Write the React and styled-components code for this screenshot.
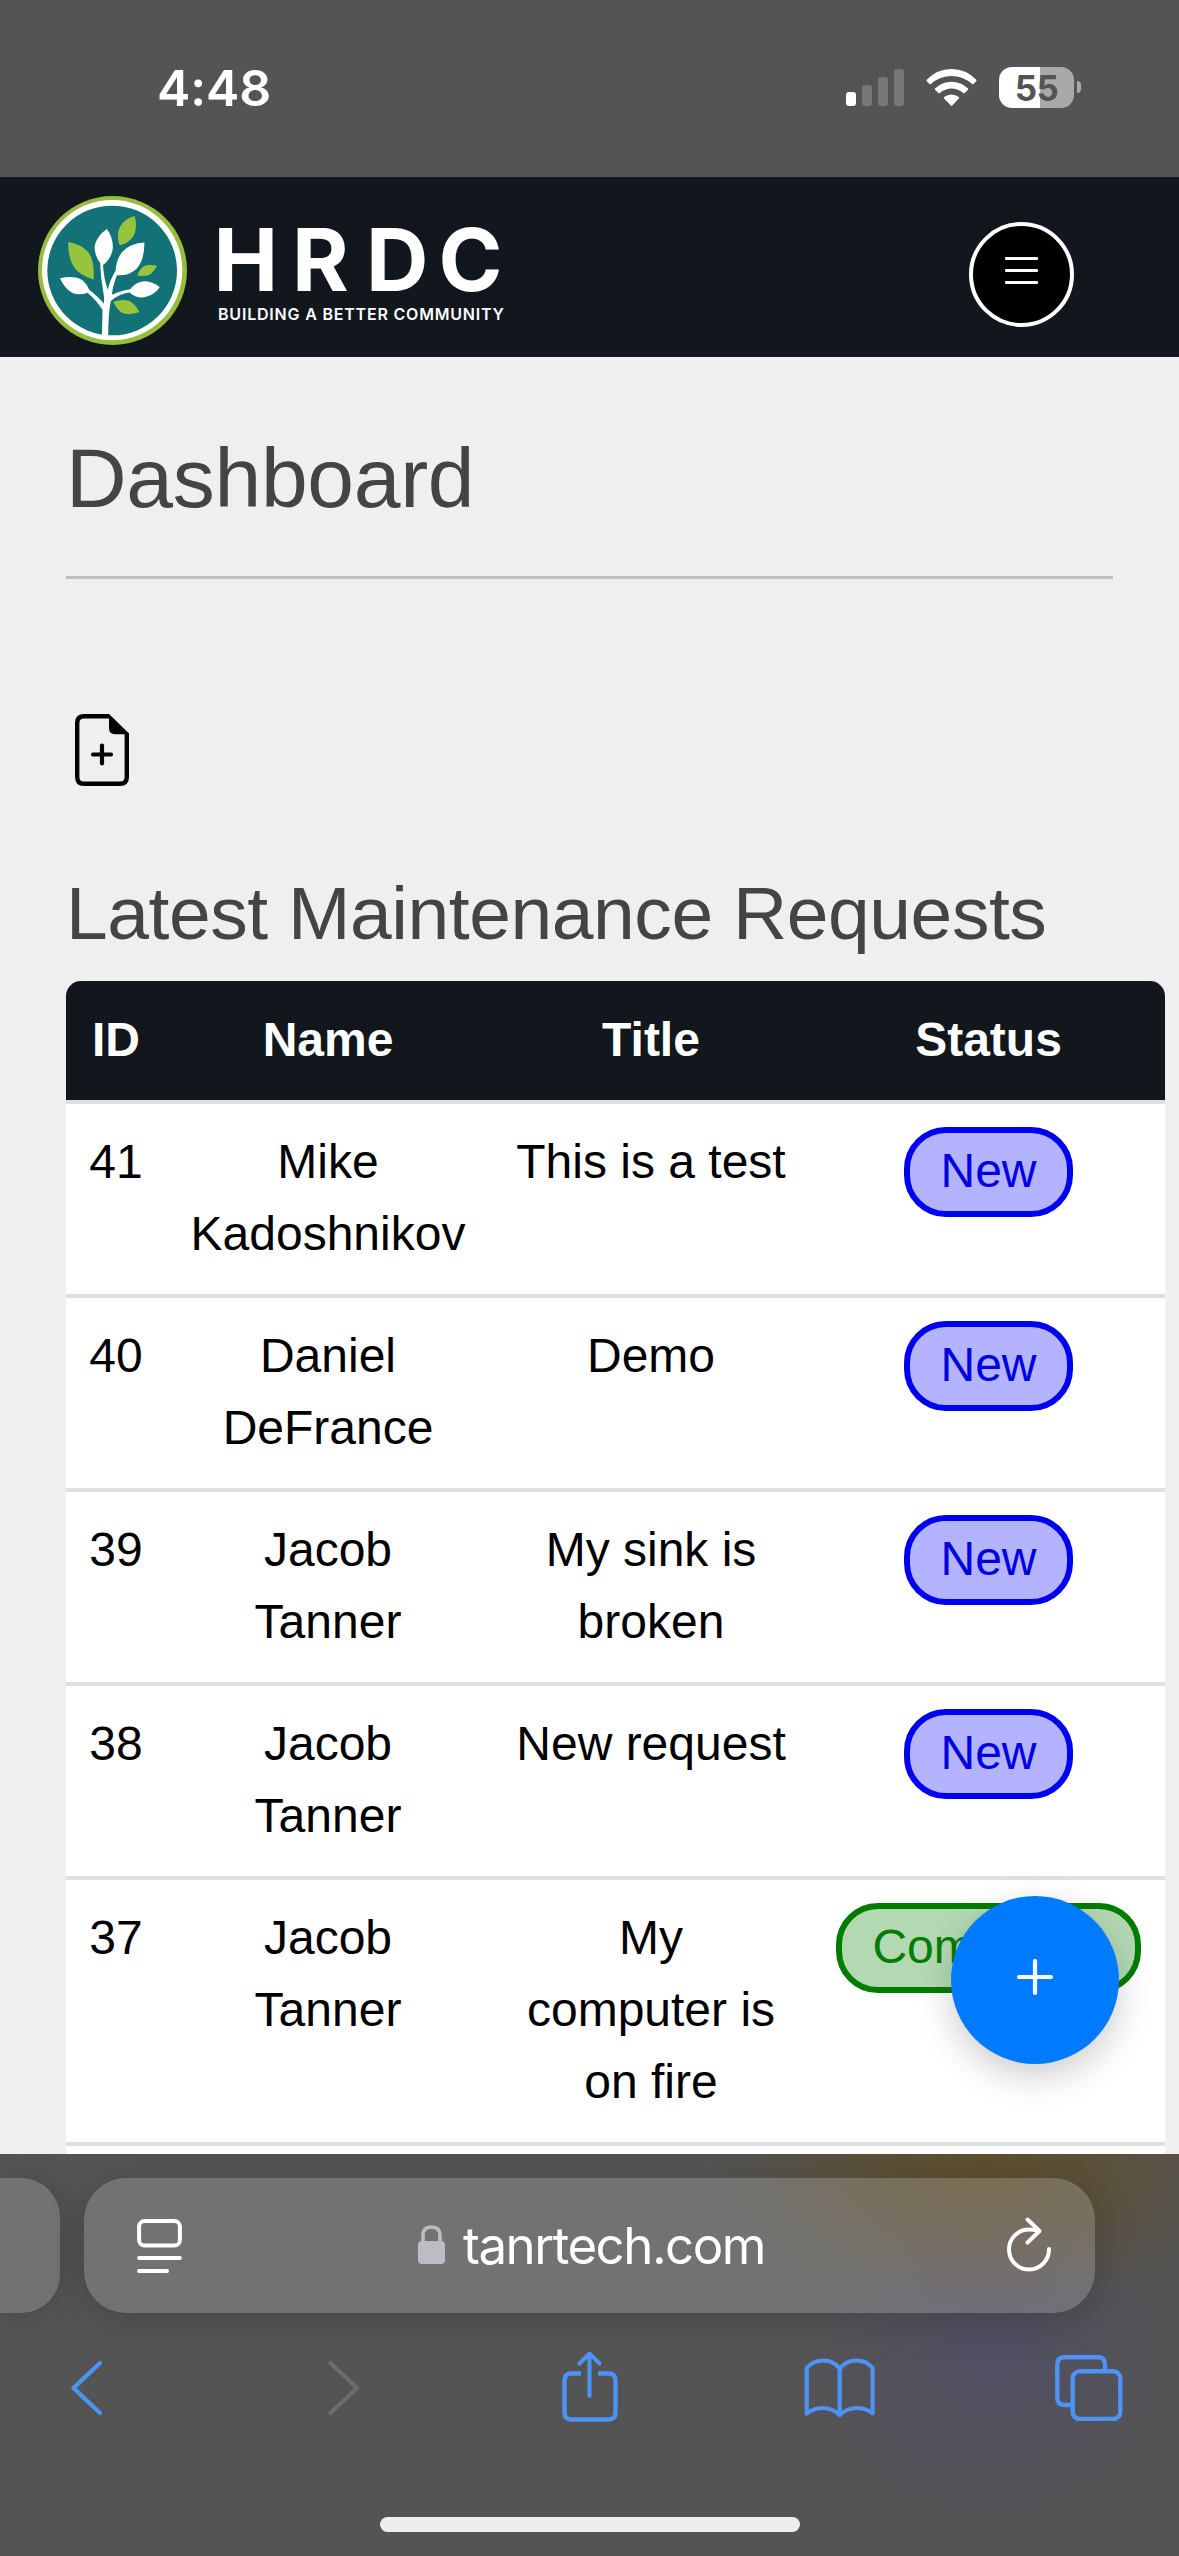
import React from "react";
import styled, { createGlobalStyle } from "styled-components";

const GlobalStyle = createGlobalStyle`
  * { box-sizing: border-box; }
  body { margin: 0; background: #efefef; font-family: "Liberation Sans", Arial, sans-serif; }
  svg { display: block; overflow: visible; }
`;

const Screen = styled.div`
  width: 1179px;
  height: 2556px;
  display: flex;
  flex-direction: column;
  overflow: hidden;
  background: #efefef;
`;

/* ---------- Status bar ---------- */
const StatusBar = styled.div`
  flex: none;
  height: 177px;
  padding: 67px 98px 0 157px;
  display: flex;
  justify-content: space-between;
  align-items: flex-start;
  background: #545454;
`;
const Clock = styled.div`
  font: 600 50px/42px Inter, sans-serif;
  letter-spacing: -0.1px;
  color: #fff;
`;
const StatusIcons = styled.div`
  display: flex;
  align-items: flex-start;
  height: 41px;
`;
const Signal = styled.div`
  display: flex;
  align-items: flex-end;
  gap: 6px;
  height: 39px;
  margin-right: 22px;
`;
const SignalBar = styled.div`
  width: 10px;
  height: ${(p) => p.$height}px;
  border-radius: 3px;
  background: ${(p) => (p.$active ? "#fff" : "#777")};
`;
const WifiIcon = styled.svg`
  width: 51px;
  height: 38px;
  margin: 2px 22px 0 0;
`;
const Battery = styled.div`
  width: 75px;
  height: 41px;
  border-radius: 13px;
  background: linear-gradient(90deg, #fff 41px, #a9a9a9 41px);
  color: #545454;
  font: 700 35px/42px Inter, sans-serif;
  letter-spacing: -0.5px;
  text-align: center;
`;
const BatteryNub = styled.div`
  width: 4px;
  height: 12px;
  margin: 14px 0 0 3px;
  border-radius: 0 4px 4px 0;
  background: #a9a9a9;
`;

/* ---------- Site header ---------- */
const Header = styled.header`
  flex: none;
  height: 180px;
  padding: 19px 105px 0 38px;
  display: flex;
  justify-content: space-between;
  align-items: flex-start;
  background: #12171d;
`;
const Brand = styled.div`
  display: flex;
  align-items: flex-start;
  gap: 32px;
`;
const MenuButton = styled.button`
  width: 105px;
  height: 105px;
  margin: 26px 0 0;
  padding: 0;
  border: 4px solid #fff;
  border-radius: 50%;
  background: #000;
  display: flex;
  justify-content: center;
  align-items: flex-start;
`;
const MenuLines = styled.span`
  display: flex;
  flex-direction: column;
  gap: 9px;
  width: 33px;
  margin-top: 31px;
`;
const MenuLine = styled.span`
  height: 3px;
  border-radius: 1px;
  background: #fff;
`;

/* ---------- Page ---------- */
const Page = styled.main`
  flex: 1;
  min-height: 0;
  overflow: hidden;
  padding: 0 14px 0 66px;
`;
const PageTitle = styled.h1`
  margin: 0 52px 0 0;
  height: 222px;
  padding-top: 73px;
  border-bottom: 3px solid #bfbfbf;
  font-size: 84px;
  line-height: 96px;
  font-weight: 400;
  letter-spacing: -0.3px;
  color: #444;
`;
const NewFileIcon = styled.svg`
  width: 54px;
  height: 72px;
  margin: 135px 0 0 9px;
`;
const SectionTitle = styled.h2`
  margin: 0;
  padding-top: 84px;
  height: 195px;
  font-size: 75px;
  line-height: 86px;
  font-weight: 400;
  letter-spacing: -0.44px;
  white-space: nowrap;
  color: #444;
`;
const Table = styled.div`
  width: 1099px;
  font-size: 48px;
  line-height: 72px;
  text-align: center;
`;
const Row = styled.div`
  display: grid;
  grid-template-columns: 100px 324px 322px 353px;
  border-bottom: 4px solid #dddfe0;
  background: #fff;
  color: #000;
`;
const HeadRow = styled(Row)`
  background: #12171d;
  background-clip: padding-box;
  border-radius: 15px 15px 0 0;
  color: #fff;
  font-weight: 700;
`;
const HeadCell = styled.div`
  padding: 23px 0 24px;
`;
const Cell = styled.div`
  padding: 22px 24px 24px;
  &:first-child {
    padding-left: 0;
    padding-right: 0;
  }
`;
const StatusCell = styled.div`
  padding-top: 23px;
  display: flex;
  justify-content: center;
  align-items: flex-start;
`;
const tones = {
  New: { ink: "#0000e0", line: "#0000f0", fill: "#b3b3ff" },
  Completed: { ink: "#007d00", line: "#007d00", fill: "#b3d9b3" },
};
const Badge = styled.span`
  height: 90px;
  padding: 2px 30px 0;
  border: 6px solid ${(p) => tones[p.$tone].line};
  border-radius: 42px;
  background: ${(p) => tones[p.$tone].fill};
  color: ${(p) => tones[p.$tone].ink};
`;
const AddButton = styled.button`
  position: fixed;
  left: 951px;
  top: 1896px;
  width: 168px;
  height: 168px;
  padding: 0 0 6px;
  border: 0;
  border-radius: 50%;
  background: #007bff;
  box-shadow: 0 12px 36px rgba(0, 0, 0, 0.2);
  display: flex;
  justify-content: center;
  align-items: center;
`;

/* ---------- Browser bar ---------- */
const BrowserBar = styled.footer`
  position: relative;
  flex: none;
  height: 402px;
  padding-top: 24px;
  overflow: hidden;
  background:
    radial-gradient(ellipse 300px 170px at 985px 5px, rgba(100, 76, 22, 0.65), rgba(100, 76, 22, 0.42) 40%, rgba(100, 76, 22, 0.12) 75%, rgba(100, 76, 22, 0) 100%),
    radial-gradient(ellipse 190px 180px at 990px 200px, rgba(76, 72, 112, 0.5), rgba(76, 72, 112, 0.24) 50%, rgba(76, 72, 112, 0) 100%),
    #545455;
`;
const TabStrip = styled.div`
  display: flex;
  gap: 24px;
`;
const PreviousTab = styled.div`
  width: 60px;
  height: 135px;
  border-radius: 0 39px 39px 0;
  background: rgba(255, 255, 255, 0.18);
  box-shadow: 0 0 36px rgba(0, 0, 0, 0.14);
`;
const AddressBar = styled.div`
  width: 1011px;
  height: 135px;
  padding: 0 44px;
  border-radius: 42px;
  background: rgba(255, 255, 255, 0.18);
  box-shadow: 0 6px 40px rgba(0, 0, 0, 0.16);
  display: grid;
  grid-template-columns: 1fr auto 1fr;
  align-items: center;
`;
const ReaderIcon = styled.svg`
  width: 45px;
  height: 54px;
  margin: 0 0 0 9px;
`;
const Address = styled.div`
  display: flex;
  align-items: center;
  gap: 18px;
  width: 346px;
  margin-left: 3px;
  font: 400 51px/60px Inter, sans-serif;
  letter-spacing: -1.5px;
  white-space: nowrap;
  color: #fff;
`;
const LockIcon = styled.svg`
  flex: none;
  width: 27px;
  height: 39px;
  margin-top: -2px;
`;
const ReloadIcon = styled.svg`
  width: 44px;
  height: 54px;
  justify-self: end;
  margin-bottom: 4px;
`;
const Toolbar = styled.nav`
  display: flex;
  justify-content: space-between;
  margin-top: 33px;
  padding: 0 51px;
`;
const ToolIcon = styled.svg`
  width: 72px;
  height: 80px;
  fill: none;
  stroke: ${(p) => (p.$disabled ? "#6c6c6d" : "#4d93f6")};
  stroke-width: 4.4px;
  stroke-linecap: round;
  stroke-linejoin: round;
`;
const HomeIndicator = styled.div`
  width: 420px;
  height: 15px;
  margin: 91px 0 0 380px;
  border-radius: 8px;
  background: #eee;
`;

const requests = [
  { id: 41, name: "Mike Kadoshnikov", title: "This is a test", status: "New" },
  { id: 40, name: "Daniel DeFrance", title: "Demo", status: "New" },
  { id: 39, name: "Jacob Tanner", title: "My sink is broken", status: "New" },
  { id: 38, name: "Jacob Tanner", title: "New request", status: "New" },
  { id: 37, name: "Jacob Tanner", title: "My computer is on fire", status: "Completed" },
];

function TreeEmblem() {
  return (
    <svg width="149" height="149" viewBox="24 48 448 448">
      <circle cx="248" cy="272" r="224" fill="#96bd3d" />
      <circle cx="247" cy="271" r="211" fill="#fff" />
      <circle cx="247" cy="272" r="195" fill="#137277" />
      <g fill="#fff">
        <path d="M216 474 L218 390 Q200 362 172 338 L178 330 Q206 352 222 372 Q224 350 220 335 Q212 290 211 250 L219 250 Q222 300 234 330 Q240 300 258 272 L266 276 Q250 310 246 345 Q266 334 302 328 L304 337 Q268 342 243 364 Q235 400 235 474 Z" />
        <path d="M231 147 Q250 172 249 204 Q246 236 217 258 Q194 232 194 200 Q200 168 231 147 Z" />
        <path d="M344 188 Q344 240 321 266 Q298 290 257 286 Q256 242 277 216 Q302 190 344 188 Z" />
        <path d="M90 295 Q134 286 157 301 Q173 313 180 336 Q150 350 125 338 Q104 325 90 295 Z" />
        <path d="M390 322 Q368 304 342 304 Q314 306 296 335 Q314 354 340 353 Q372 348 390 322 Z" />
      </g>
      <g fill="#96c43c">
        <path d="M115 186 Q154 192 176 218 Q195 244 191 299 Q150 288 131 260 Q114 234 115 186 Z" />
        <path d="M315 108 Q324 144 311 168 Q298 190 269 196 Q258 160 272 138 Q286 116 315 108 Z" />
        <path d="M382 258 Q346 250 334 266 Q326 276 323 287 Q352 292 364 282 Q374 274 382 258 Z" />
        <path d="M250 366 Q278 356 299 364 Q318 374 329 397 Q300 408 277 400 Q262 390 250 366 Z" />
      </g>
    </svg>
  );
}

function Wordmark() {
  return (
    <svg width="290" height="149" viewBox="219 196 290 149" fill="#fff" fontFamily="Inter, sans-serif">
      <text x="213.5 292 366 438.5" y="290.5" fontSize="86.5" fontWeight="700">
        HRDC
      </text>
      <text x="218" y="320" fontSize="16" fontWeight="600" textLength="286">
        BUILDING A BETTER COMMUNITY
      </text>
    </svg>
  );
}

export default function App() {
  return (
    <Screen>
      <GlobalStyle />
      <StatusBar>
        <Clock>4:48</Clock>
        <StatusIcons>
          <Signal>
            <SignalBar $height={14} $active />
            <SignalBar $height={21} />
            <SignalBar $height={29} />
            <SignalBar $height={37} />
          </Signal>
          <WifiIcon viewBox="0 0 51 38" fill="#fff">
            <path d="M0.8 10.8 Q11 0 25.5 0 Q40 0 50.2 10.8 Q50.8 11.5 50.2 12.2 L47.4 15 Q46.8 15.6 46.1 15 Q37 7 25.5 7 Q14 7 4.9 15 Q4.2 15.6 3.6 15 L0.8 12.2 Q0.2 11.5 0.8 10.8 Z" />
            <path d="M9 19.4 Q16 12.8 25.5 12.8 Q35 12.8 42 19.4 Q42.7 20.1 42 20.8 L38.6 24.1 Q38 24.8 37.2 24.1 Q32 19.6 25.5 19.6 Q19 19.6 13.8 24.1 Q13 24.8 12.4 24.1 L9 20.8 Q8.3 20.1 9 19.4 Z" />
            <path d="M18.2 28.1 Q21.3 25.6 25.5 25.6 Q29.7 25.6 32.8 28.1 Q33.6 28.9 32.9 29.6 L26.2 36.6 Q25.5 37.3 24.8 36.6 L18.1 29.6 Q17.4 28.9 18.2 28.1 Z" />
          </WifiIcon>
          <Battery>55</Battery>
          <BatteryNub />
        </StatusIcons>
      </StatusBar>

      <Header>
        <Brand>
          <TreeEmblem />
          <Wordmark />
        </Brand>
        <MenuButton aria-label="Menu">
          <MenuLines>
            <MenuLine />
            <MenuLine />
            <MenuLine />
          </MenuLines>
        </MenuButton>
      </Header>

      <Page>
        <PageTitle>Dashboard</PageTitle>
        <NewFileIcon viewBox="0 0 54 72">
          <path d="M34 2.2 H9 Q2.2 2.2 2.2 9 V63 Q2.2 69.8 9 69.8 H45 Q51.8 69.8 51.8 63 V19" fill="none" stroke="#000" strokeWidth="4.4" />
          <path d="M34 0 L54 19.5 V20.2 H40 Q34 20.2 34 14 Z" />
          <path d="M27 31.5 V49.5 M18 40.5 H36" stroke="#000" strokeWidth="4.2" strokeLinecap="round" />
        </NewFileIcon>
        <SectionTitle>Latest Maintenance Requests</SectionTitle>
        <Table>
          <HeadRow>
            <HeadCell>ID</HeadCell>
            <HeadCell>Name</HeadCell>
            <HeadCell>Title</HeadCell>
            <HeadCell>Status</HeadCell>
          </HeadRow>
          {requests.map((r) => (
            <Row key={r.id}>
              <Cell>{r.id}</Cell>
              <Cell>{r.name}</Cell>
              <Cell>{r.title}</Cell>
              <StatusCell>
                <Badge $tone={r.status}>{r.status}</Badge>
              </StatusCell>
            </Row>
          ))}
          <Row>
            <Cell />
          </Row>
        </Table>
      </Page>

      <AddButton aria-label="Add request">
        <svg width="36" height="36" viewBox="0 0 36 36" stroke="#fff" strokeWidth="4.2" strokeLinecap="round">
          <path d="M18 2 V34 M2 18 H34" />
        </svg>
      </AddButton>

      <BrowserBar>
        <TabStrip>
          <PreviousTab />
          <AddressBar>
            <ReaderIcon viewBox="0 0 45 54" fill="none" stroke="#fff" strokeWidth="4" strokeLinecap="round">
              <rect x="2.1" y="2.1" width="40.8" height="24.4" rx="5.5" />
              <path d="M2.1 39 H42.9 M2.1 52 H30" />
            </ReaderIcon>
            <Address>
              <LockIcon viewBox="0 0 27 39">
                <rect x="0" y="16" width="27" height="23" rx="4" fill="#bdbcc5" />
                <path d="M5 17 V10.5 Q5 2 13.5 2 Q22 2 22 10.5 V17" fill="none" stroke="#bdbcc5" strokeWidth="3.6" />
              </LockIcon>
              <span>tanrtech.com</span>
            </Address>
            <ReloadIcon viewBox="0 0 44 54" fill="none" stroke="#fff" strokeWidth="4" strokeLinecap="round" strokeLinejoin="round">
              <path d="M42 32 A20 20 0 1 1 22 12.5 Q27 12.5 32 14" />
              <path d="M20.5 2.5 L32.5 14 L20.5 25.5" />
            </ReloadIcon>
          </AddressBar>
        </TabStrip>
        <Toolbar>
          <ToolIcon viewBox="0 0 72 80">
            <path d="M49 17 L22.5 42 L49 67" />
          </ToolIcon>
          <ToolIcon viewBox="0 0 72 80" $disabled>
            <path d="M28.5 17 L55 42 L28.5 67" />
          </ToolIcon>
          <ToolIcon viewBox="0 0 72 80">
            <path d="M27 27.5 H17.5 Q10.5 27.5 10.5 34.5 V66.5 Q10.5 73.5 17.5 73.5 H54.5 Q61.5 73.5 61.5 66.5 V34.5 Q61.5 27.5 54.5 27.5 H44" strokeLinecap="butt" />
            <path d="M35.5 50 V7.5 M25.5 17.5 L35.5 7.5 L45.5 17.5" strokeWidth="4" />
          </ToolIcon>
          <ToolIcon viewBox="0 0 72 80">
            <path d="M1.7 67.5 V22 Q8 14.5 18 14.5 Q29 14.5 34.7 23 Q40.5 14.5 51.5 14.5 Q61.5 14.5 67.6 22 V67.5 Q61 62 52 62 Q42 62 34.7 69 Q27.5 62 18 62 Q9 62 1.7 67.5 Z M34.7 23 V68" strokeWidth="4.2" />
          </ToolIcon>
          <ToolIcon viewBox="0 0 72 80">
            <rect x="16.7" y="25.3" width="47.6" height="47.6" rx="7" />
            <path d="M49 25 V18.5 Q49 11.3 42 11.3 H8.5 Q1.3 11.3 1.3 18.5 V52 Q1.3 59 8.5 59 H16" strokeLinecap="butt" />
          </ToolIcon>
        </Toolbar>
        <HomeIndicator />
      </BrowserBar>
    </Screen>
  );
}
